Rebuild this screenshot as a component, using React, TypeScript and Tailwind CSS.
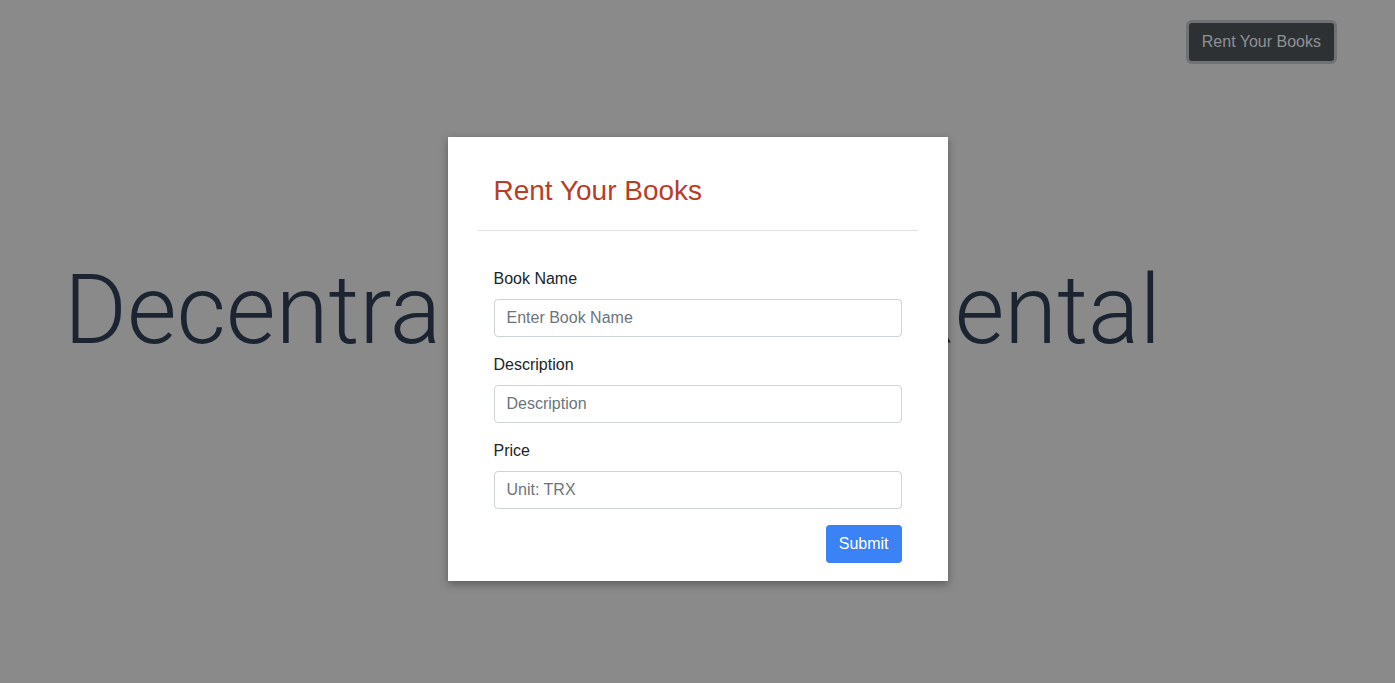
import React from 'react';

const FormField: React.FC<{ label: string; placeholder: string }> = ({ label, placeholder }) => (
  <div className="mb-4">
    <label className="block mb-2 text-[16px] leading-6 text-[#212529]">{label}</label>
    <input
      type="text"
      placeholder={placeholder}
      className="block w-full h-[38px] px-3 text-[16px] text-[#212529] bg-white border border-[#ced4da] rounded-[4px] placeholder:text-[#6c757d] outline-none"
    />
  </div>
);

export default function App() {
  return (
    <div className="relative min-h-screen bg-[#8a8a8a] font-['Liberation_Sans',Arial,sans-serif] overflow-hidden">
      {/* Nav */}
      <div className="flex justify-end pt-[20px] pr-[58px]">
        <button className="h-[44px] px-[13px] rounded-[6px] bg-[#2e3134] text-[16px] text-[#8f9295] border-[3px] border-[#6f7174]">
          Rent Your Books
        </button>
      </div>

      {/* Hero */}
      <div className="pl-[64px] mt-[198px]">
        <h1 className="font-['Roboto',sans-serif] font-light text-[96px] leading-none text-[#1b2430]">
          Decentralized Book Rental
        </h1>
      </div>

      {/* Modal */}
      <div className="absolute inset-0 flex justify-center items-start pt-[137px]">
        <div className="w-[500px] bg-white px-[30px] shadow-[0_3px_8px_rgba(0,0,0,0.35)]">
          <div className="px-4 pt-[37px] pb-[22px] border-b border-[#dee2e6]">
            <h2 className="text-[28px] leading-[34px] text-[#b83d26]">Rent Your Books</h2>
          </div>
          <form className="px-4 pt-[36px] pb-[18px]">
            <FormField label="Book Name" placeholder="Enter Book Name" />
            <FormField label="Description" placeholder="Description" />
            <FormField label="Price" placeholder="Unit: TRX" />
            <div className="flex justify-end">
              <button
                type="button"
                className="h-[38px] px-[13px] rounded-[4px] bg-[#3a82f6] text-white text-[16px]"
              >
                Submit
              </button>
            </div>
          </form>
        </div>
      </div>
    </div>
  );
}
